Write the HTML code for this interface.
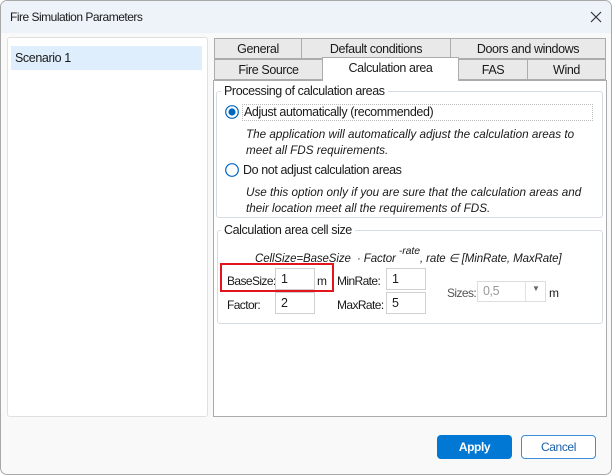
<!DOCTYPE html>
<html><head><style>
*{box-sizing:border-box}
body{margin:0;width:612px;height:475px;overflow:hidden;font-family:"Liberation Sans",sans-serif;font-size:12px;color:#1a1a1a;background:#fff;letter-spacing:-0.4px}
.win{position:absolute;left:0;top:0;width:612px;height:475px;border:1px solid #a8a8a8;border-radius:7px;background:#f9f9f9;overflow:hidden}
.title{position:absolute;left:0;top:0;width:610px;height:32px;background:#eef3f9}
.a{position:absolute;white-space:nowrap}
.tab{position:absolute;height:21px;border:1px solid #acacac;background:#e9e9e9;text-align:center;line-height:20px;font-size:12.5px}
.box{position:absolute;background:#fff;border:1px solid #ababab}
.grp{position:absolute;border:1px solid #d6dce3;border-radius:3px}
.leg{position:absolute;background:#fff;padding:0 3px;font-size:12.5px}
.it{font-style:italic;font-size:11.7px;letter-spacing:0}
.in{position:absolute;background:#fff;border:1px solid #d0d0d0;height:22px;line-height:20px;padding-left:5px;font-size:12.5px}
.l{font-size:12px;letter-spacing:-0.6px}
</style></head><body>
<div class="win">
<div class="title"></div>
<div class="a" style="left:9px;top:9px;font-size:12px;letter-spacing:-0.5px">Fire Simulation Parameters</div>
<svg class="a" style="left:589px;top:10px" width="12" height="12"><path d="M1 1L11 11M11 1L1 11" stroke="#333" stroke-width="1.2"/></svg>
<div class="box" style="left:6px;top:36px;width:201px;height:380px;border-color:#e0e0e0;border-radius:3px"></div>
<div class="a" style="left:10px;top:45px;width:191px;height:24px;background:#dfeefc"></div>
<div class="a" style="left:14px;top:50px;font-size:12.5px">Scenario 1</div>
<div class="box" style="left:212px;top:79px;width:394px;height:337px"></div>
<div class="tab" style="left:213px;top:37px;width:88px">General</div>
<div class="tab" style="left:300px;top:37px;width:150px">Default conditions</div>
<div class="tab" style="left:449px;top:37px;width:156px">Doors and windows</div>
<div class="tab" style="left:213px;top:58px;width:109px">Fire Source</div>
<div class="tab" style="left:457px;top:58px;width:70px">FAS</div>
<div class="tab" style="left:526px;top:58px;width:79px">Wind</div>
<div class="tab" style="left:321px;top:56px;width:137px;height:24px;background:#fff;border-bottom:none">Calculation area</div>
<div class="grp" style="left:215px;top:90px;width:387px;height:127px"></div>
<div class="leg" style="left:220px;top:83px">Processing of calculation areas</div>
<svg class="a" style="left:224px;top:104px" width="14" height="14"><circle cx="7" cy="7" r="6.3" fill="#fff" stroke="#0067c0" stroke-width="1.2"/><circle cx="7" cy="7" r="3.6" fill="#0067c0"/></svg>
<div class="a" style="left:241px;top:103px;font-size:12.5px;border:1px dotted #bbb;width:351px;height:17px;padding-left:1px">Adjust automatically (recommended)</div>
<div class="a it" style="left:245px;top:126px;line-height:16px">The application will automatically adjust the calculation areas to<br>meet all FDS requirements.</div>
<svg class="a" style="left:224px;top:162px" width="14" height="14"><circle cx="7" cy="7" r="6.3" fill="#fff" stroke="#0067c0" stroke-width="1.2"/></svg>
<div class="a" style="left:242px;top:162px;font-size:12.5px">Do not adjust calculation areas</div>
<div class="a it" style="left:245px;top:184px;line-height:16px">Use this option only if you are sure that the calculation areas and<br>their location meet all the requirements of FDS.</div>
<div class="grp" style="left:216px;top:229px;width:386px;height:94px"></div>
<div class="leg" style="left:220px;top:222px">Calculation area cell size</div>
<div class="a it" style="left:254px;top:247px;font-size:11.5px;letter-spacing:-0.1px">CellSize=BaseSize &nbsp;· Factor <sup style="font-size:10.5px;position:relative;top:-3px">-rate</sup>, rate ∈ [MinRate, MaxRate]</div>
<div class="a l" style="left:226px;top:273px">BaseSize:</div>
<div class="in" style="left:274px;top:267px;width:40px">1</div>
<div class="a l" style="left:316px;top:273px">m</div>
<div class="a" style="left:219px;top:262px;width:114px;height:29px;border:2px solid #e3141b"></div>
<div class="a l" style="left:226px;top:297px">Factor:</div>
<div class="in" style="left:274px;top:291px;width:40px">2</div>
<div class="a l" style="left:336px;top:273px">MinRate:</div>
<div class="in" style="left:385px;top:267px;width:40px">1</div>
<div class="a l" style="left:336px;top:297px">MaxRate:</div>
<div class="in" style="left:385px;top:291px;width:40px">5</div>
<div class="a l" style="left:446px;top:285px;color:#555">Sizes:</div>
<div class="in" style="left:476px;top:280px;width:69px;height:21px;line-height:19px;color:#999;border-color:#ddd">0,5</div>
<div class="a" style="left:524px;top:281px;width:1px;height:19px;background:#e2e2e2"></div>
<div class="a" style="left:531px;top:283px;font-size:8px;color:#666">▼</div>
<div class="a l" style="left:548px;top:285px">m</div>
<div class="a" style="left:436px;top:434px;width:75px;height:24px;background:#0078d4;border-radius:4px;color:#fff;font-weight:bold;text-align:center;line-height:24px;font-size:12px">Apply</div>
<div class="a" style="left:520px;top:434px;width:75px;height:24px;background:#fff;border:1px solid #3b8fd9;border-radius:4px;color:#1a5fa8;text-align:center;line-height:22px;font-size:12px">Cancel</div>
</div>
</body></html>
